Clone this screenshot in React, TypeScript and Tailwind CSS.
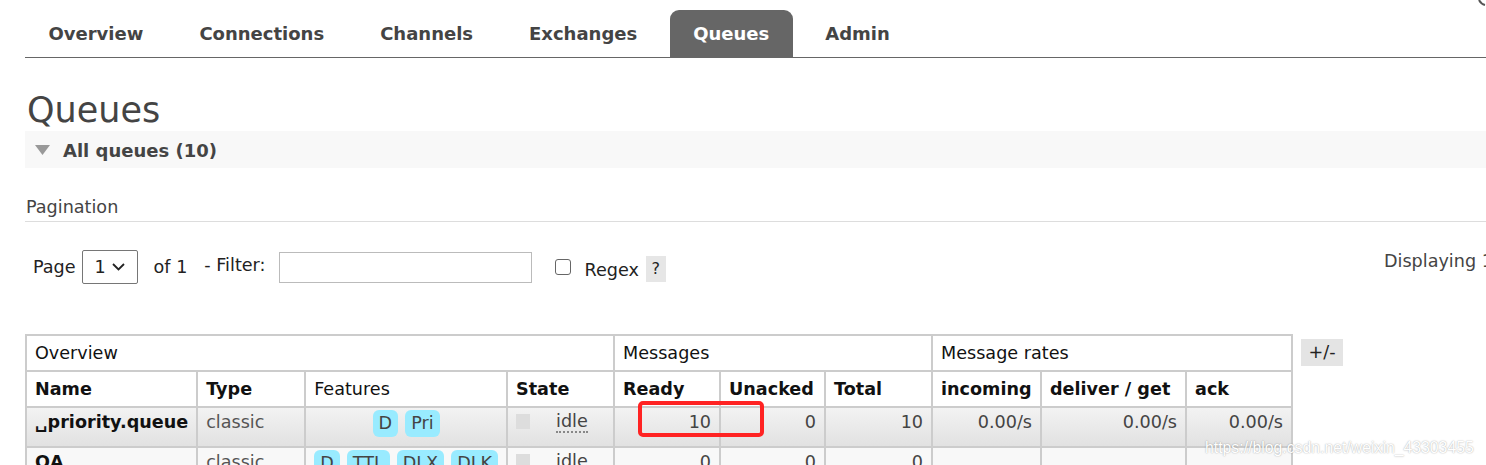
import React from "react";

const font = { fontFamily: '"DejaVu Sans", Verdana, sans-serif' };

function Badge({ children }: { children: React.ReactNode }) {
  return (
    <span className="inline-flex h-[27px] items-center rounded-[6px] bg-[#99ebff] px-[6px] text-[#444]">
      {children}
    </span>
  );
}

function StateCell() {
  return (
    <td className="border-2 border-[#cccccc] px-[8px] pt-[3px] align-top">
      <div className="flex items-start">
        <span className="mt-[3px] h-[15px] w-[14px] bg-[#dddddd]" />
        <span className="ml-[26px] border-b-2 border-dotted border-[#888] leading-[20px] text-[#444]">idle</span>
      </div>
    </td>
  );
}

export default function App() {
  const tabs = ["Overview", "Connections", "Channels", "Exchanges", "Queues", "Admin"];
  const td = "border-2 border-[#cccccc] px-[8px]";
  const dt = "border-2 border-[#cccccc] px-[8px] pt-[1px] align-top";
  return (
    <div
      className="relative h-[465px] w-[1486px] overflow-hidden bg-white text-[#444]"
      style={font}
    >
      <svg className="absolute right-0 top-0" width="8" height="6" viewBox="0 0 8 6">
        <path d="M1 0 Q3 4 7 5" stroke="#555" strokeWidth="2" fill="none" />
      </svg>
      <div className="pl-[25px]">
        {/* nav */}
        <div className="flex h-[58px] items-end gap-[9px] border-b border-[#666] pt-[9px]">
          {tabs.map((t) => (
            <div
              key={t}
              className={
                "flex h-[47px] items-center px-[23.5px] text-[18px] font-bold " +
                (t === "Queues" ? "rounded-t-[9px] bg-[#666] text-white" : "text-[#444]")
              }
            >
              {t}
            </div>
          ))}
        </div>

        <h1 className="mt-[32px] h-[40px] pl-[2px] text-[35px] leading-[40px] text-[#444]">Queues</h1>

        <div className="mt-[1px] flex h-[37px] items-center bg-[#f8f8f8] pt-[1px]">
          <svg className="ml-[10px]" width="15" height="11" viewBox="0 0 15 11">
            <path d="M0 0 H15 L7.5 10 Z" fill="#999" />
          </svg>
          <span className="ml-[13px] text-[18px] font-bold text-[#444]">All queues (10)</span>
        </div>

        <div className="mt-[28px] border-b border-[#dddddd] pb-[3px] pl-[1px] text-[17.6px] leading-[22px] text-[#444]">
          Pagination
        </div>

        <div className="mt-[28px] flex h-[34px] items-center text-[17.6px] text-[#222]">
          <span className="ml-[8px]">Page</span>
          <div className="ml-[6px] flex h-[34px] w-[56px] items-center justify-between rounded-[2px] border border-[#767676] px-[12px]">
            <span>1</span>
            <svg width="13" height="8" viewBox="0 0 13 8">
              <path d="M1 1 L6.5 6.5 L12 1" stroke="#222" strokeWidth="1.8" fill="none" />
            </svg>
          </div>
          <span className="ml-[16px]">of 1</span>
          <span className="ml-[17px] self-start leading-[30px]">- Filter:</span>
          <div className="ml-[14px] h-[31px] w-[253px] border border-[#bbbbbb] bg-white" />
          <div className="ml-[23px] h-[16px] w-[16px] rounded-[3px] border border-[#666]" />
          <span className="ml-[13px] pt-[6px]">Regex</span>
          <span className="ml-[7px] mt-[4px] flex h-[26px] w-[20px] items-center justify-center bg-[#e6e6e6] text-[16px]">
            ?
          </span>
          <span className="ml-auto w-[102px] self-start whitespace-nowrap leading-[22px] text-[#444]">
            Displaying 10 items , page size up to: 100
          </span>
        </div>

        <div className="mt-[50px] flex items-start gap-[8px]">
          <div className="relative">
            <table className="table-fixed border-collapse border-2 border-[#cccccc] text-[17.6px] text-[#111]">
              <colgroup>
                <col className="w-[171px]" />
                <col className="w-[108px]" />
                <col className="w-[200px]" />
                <col className="w-[107px]" />
                <col className="w-[106px]" />
                <col className="w-[105px]" />
                <col className="w-[107px]" />
                <col className="w-[109px]" />
                <col className="w-[145px]" />
                <col className="w-[106px]" />
              </colgroup>
              <tbody>
                <tr className="h-[36px]">
                  <td colSpan={4} className={td + " font-normal"}>Overview</td>
                  <td colSpan={3} className={td}>Messages</td>
                  <td colSpan={3} className={td}>Message rates</td>
                </tr>
                <tr className="h-[36px] font-bold">
                  <td className={td}>Name</td>
                  <td className={td}>Type</td>
                  <td className={td + " font-normal"}>Features</td>
                  <td className={td}>State</td>
                  <td className={td}>Ready</td>
                  <td className={td}>Unacked</td>
                  <td className={td}>Total</td>
                  <td className={td}>incoming</td>
                  <td className={td}>deliver / get</td>
                  <td className={td}>ack</td>
                </tr>
                <tr className="h-[40px] bg-gradient-to-b from-[#f3f3f3] to-[#e1e1e1]">
                  <td className={dt + " font-bold text-[#111]"}>␣priority.queue</td>
                  <td className={dt + " text-[#555]"}>classic</td>
                  <td className="border-2 border-[#cccccc] px-[8px] pt-[2px] align-top">
                    <div className="flex justify-center gap-[7px]">
                      <Badge>D</Badge>
                      <Badge>Pri</Badge>
                    </div>
                  </td>
                  <StateCell />
                  <td className={dt + " text-right text-[#444]"}>10</td>
                  <td className={dt + " text-right text-[#444]"}>0</td>
                  <td className={dt + " text-right text-[#444]"}>10</td>
                  <td className={dt + " text-right text-[#444]"}>0.00/s</td>
                  <td className={dt + " text-right text-[#444]"}>0.00/s</td>
                  <td className={dt + " text-right text-[#444]"}>0.00/s</td>
                </tr>
                <tr className="h-[40px] bg-[#f8f8f8]">
                  <td className={dt + " font-bold text-[#111]"}>QA</td>
                  <td className={dt + " text-[#555]"}>classic</td>
                  <td className="border-2 border-[#cccccc] px-[8px] pt-[2px] align-top">
                    <div className="flex justify-center gap-[7px]">
                      <Badge>D</Badge>
                      <Badge>TTL</Badge>
                      <Badge>DLX</Badge>
                      <Badge>DLK</Badge>
                    </div>
                  </td>
                  <StateCell />
                  <td className={dt + " text-right text-[#444]"}>0</td>
                  <td className={dt + " text-right text-[#444]"}>0</td>
                  <td className={dt + " text-right text-[#444]"}>0</td>
                  <td className={dt} />
                  <td className={dt} />
                  <td className={dt} />
                </tr>
              </tbody>
            </table>
            {/* annotation */}
            <div className="pointer-events-none absolute left-[613px] top-[67px] h-[36px] w-[126px] rounded-[5px] border-[4px] border-[#ff2323]" />
          </div>
          <span className="mt-[5px] flex h-[27px] w-[42px] items-center justify-center bg-[#e4e4e4] text-[17.6px] text-[#222]">
            +/-
          </span>
        </div>
      </div>
      <div
        className="absolute left-[1205px] top-[436px] whitespace-nowrap text-[15.8px] text-white [text-shadow:0_0_1.5px_rgba(0,0,0,0.4)]"
        style={{ fontFamily: '"Liberation Sans", Arial, sans-serif' }}
      >
        https://blog.csdn.net/weixin_43303455
      </div>
    </div>
  );
}
